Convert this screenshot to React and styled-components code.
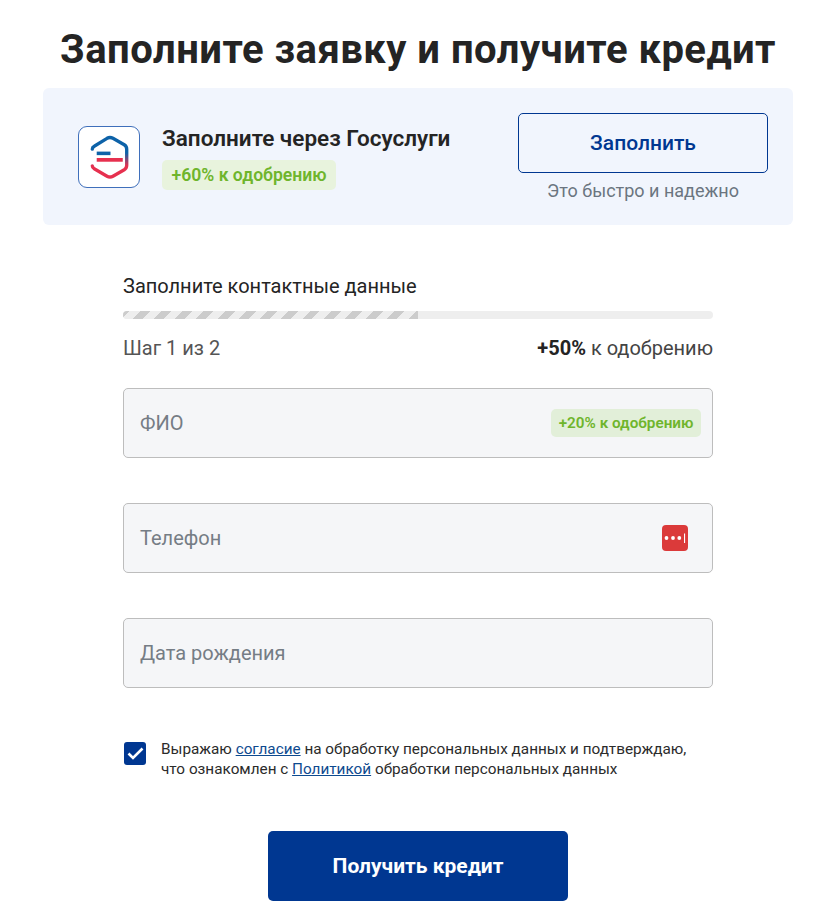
import React from 'react';
import styled, { createGlobalStyle } from 'styled-components';

const GlobalStyle = createGlobalStyle`
  html, body {
    margin: 0;
    padding: 0;
    background: #fff;
    font-family: Roboto, "Liberation Sans", sans-serif;
    color: #242424;
  }
`;

const Page = styled.div`
  width: 750px;
  margin-left: 43px;
  display: flex;
  flex-direction: column;
  align-items: center;
`;

const Title = styled.h1`
  margin: 26px 0 0;
  height: 48px;
  font-size: 40px;
  line-height: 48px;
  font-weight: 700;
  letter-spacing: 0.48px;
  white-space: nowrap;
  color: #242424;
`;

const Banner = styled.section`
  width: 100%;
  height: 137px;
  margin-top: 14px;
  box-sizing: border-box;
  padding: 25px 25px 0 35px;
  display: flex;
  background: #f1f5fd;
  border-radius: 6px;
`;

const LogoBox = styled.div`
  width: 62px;
  height: 62px;
  margin-top: 13px;
  box-sizing: border-box;
  background: #fff;
  border: 1.5px solid #3f6fbb;
  border-radius: 9px;
  display: flex;
  align-items: center;
  justify-content: center;
`;

const BannerText = styled.div`
  margin-left: 22px;
  margin-top: 12px;
  flex: 1;
`;

const BannerTitle = styled.div`
  font-size: 22.5px;
  line-height: 26px;
  font-weight: 600;
`;

const Badge = styled.span`
  display: inline-flex;
  align-items: center;
  box-sizing: border-box;
  border-radius: 5px;
  background: ${p => p.$field ? '#e2efd9' : '#e8f3dd'};
  color: #6fb52c;
  font-weight: 600;
  font-size: ${p => p.$field ? '15.3px' : '17.6px'};
  height: ${p => p.$field ? '28px' : '30px'};
  padding: 0 ${p => p.$field ? '7.5px' : '9.5px'};
  white-space: nowrap;
`;

const BannerBadge = styled(Badge)`
  margin-top: 9px;
`;

const BannerAction = styled.div`
  width: 250px;
  display: flex;
  flex-direction: column;
  align-items: center;
`;

const OutlineButton = styled.button`
  width: 100%;
  height: 60px;
  box-sizing: border-box;
  background: transparent;
  border: 1px solid #003791;
  border-radius: 5px;
  color: #003791;
  font-family: inherit;
  font-size: 21px;
  font-weight: 500;
`;

const ActionNote = styled.div`
  margin-top: 6px;
  font-size: 18px;
  line-height: 24px;
  color: #6b7580;
`;

const Form = styled.form`
  width: 590px;
  margin-top: 49px;
  display: flex;
  flex-direction: column;
`;

const StepTitle = styled.div`
  font-size: 20px;
  line-height: 24px;
`;

const Track = styled.div`
  height: 8px;
  margin-top: 13px;
  border-radius: 4px;
  background: #eeeeee;
  overflow: hidden;
`;

const Stripes = styled.div`
  height: 100%;
  background: repeating-linear-gradient(
    -45deg,
    #cccccc 0,
    #cccccc 7px,
    #eeeeee 7px,
    #eeeeee 15px
  );
`;

const StepRow = styled.div`
  margin-top: 17px;
  display: flex;
  justify-content: space-between;
  font-size: 20px;
  line-height: 24px;
  color: #555;
`;

const Gain = styled.span`
  color: #444;
  b {
    font-weight: 700;
    color: #242424;
  }
`;

const Field = styled.div`
  height: 70px;
  margin-top: ${p => p.$first ? '28px' : '45px'};
  box-sizing: border-box;
  padding: 0 11px 0 16px;
  display: flex;
  align-items: center;
  justify-content: space-between;
  background: #f5f6f8;
  border: 1px solid #bdbdbd;
  border-radius: 5px;
`;

const Placeholder = styled.span`
  font-size: 20px;
  color: #757d85;
`;

const PassIcon = styled.svg`
  margin-right: 13px;
`;

const Consent = styled.div`
  margin-top: 52px;
  margin-left: 1px;
  display: flex;
  gap: 15px;
`;

const CheckBox = styled.span`
  width: 22px;
  height: 23px;
  flex: none;
  margin-top: 2px;
  border-radius: 3px;
  background: #003791;
  display: flex;
  align-items: center;
  justify-content: center;
`;

const ConsentText = styled.div`
  margin-top: -1px;
  font-size: 15.3px;
  line-height: 20px;
  color: #2b2b2b;
  a {
    color: #0d4a8f;
    text-decoration: underline;
  }
`;

const Submit = styled.button`
  width: 300px;
  height: 70px;
  margin: 52px auto 0;
  border: 0;
  border-radius: 5px;
  background: #003791;
  color: #fff;
  font-family: inherit;
  font-size: 21px;
  font-weight: 700;
`;

function GosLogo() {
  return (
    <svg width="59" height="59" viewBox="0 0 60 60" fill="none">
      <defs>
        <linearGradient id="gos" gradientUnits="userSpaceOnUse" x1="0" y1="9" x2="0" y2="50">
          <stop offset="0.4" stopColor="#0d62a8" />
          <stop offset="0.72" stopColor="#e6304f" />
        </linearGradient>
      </defs>
      <path
        d="M12.5 21.5 Q12.5 19.5 14.5 18.5 L27.5 10.5 Q30.5 8.8 33.5 10.5 L45 17 Q47.5 18.5 47.5 21.5 L47.5 38 Q47.5 41 45 42.5 L33.5 49 Q30.5 50.7 27.5 49 L14.5 41.5 Q12.5 40.5 12.5 38.5"
        stroke="url(#gos)"
        strokeWidth="3.4"
        strokeLinecap="round"
        fill="none"
      />
      <rect x="17" y="24" width="14" height="3.6" fill="#0d62a8" />
      <rect x="17" y="30.5" width="26.5" height="3.8" fill="#e6304f" />
    </svg>
  );
}

export default function App() {
  return (
    <>
      <GlobalStyle />
      <Page>
        <Title>Заполните заявку и получите кредит</Title>
        <Banner>
          <LogoBox><GosLogo /></LogoBox>
          <BannerText>
            <BannerTitle>Заполните через Госуслуги</BannerTitle>
            <BannerBadge>+60% к одобрению</BannerBadge>
          </BannerText>
          <BannerAction>
            <OutlineButton type="button">Заполнить</OutlineButton>
            <ActionNote>Это быстро и надежно</ActionNote>
          </BannerAction>
        </Banner>
        <Form>
          <StepTitle>Заполните контактные данные</StepTitle>
          <Track><Stripes style={{ width: '50%' }} /></Track>
          <StepRow>
            <span>Шаг 1 из 2</span>
            <Gain><b>+50%</b> к одобрению</Gain>
          </StepRow>
          <Field $first>
            <Placeholder>ФИО</Placeholder>
            <Badge $field>+20% к одобрению</Badge>
          </Field>
          <Field>
            <Placeholder>Телефон</Placeholder>
            <PassIcon width="26" height="26" viewBox="0 0 26 26">
              <rect width="26" height="26" rx="4" fill="#db3a3a" />
              <circle cx="4.5" cy="13" r="1.9" fill="#fff" />
              <circle cx="11" cy="13" r="1.9" fill="#fff" />
              <circle cx="17.3" cy="13" r="1.9" fill="#fff" />
              <rect x="22" y="8.5" width="1.1" height="9.5" fill="#fff" />
            </PassIcon>
          </Field>
          <Field>
            <Placeholder>Дата рождения</Placeholder>
          </Field>
          <Consent>
            <CheckBox>
              <svg width="17" height="13" viewBox="0 0 17 13" fill="none">
                <path d="M1.5 6.5 L6 11 L15.5 1.5" stroke="#fff" strokeWidth="2.6" />
              </svg>
            </CheckBox>
            <ConsentText>
              Выражаю <a href="#">согласие</a> на обработку персональных данных и подтверждаю,
              <br />
              что ознакомлен с <a href="#">Политикой</a> обработки персональных данных
            </ConsentText>
          </Consent>
          <Submit type="button">Получить кредит</Submit>
        </Form>
      </Page>
    </>
  );
}
